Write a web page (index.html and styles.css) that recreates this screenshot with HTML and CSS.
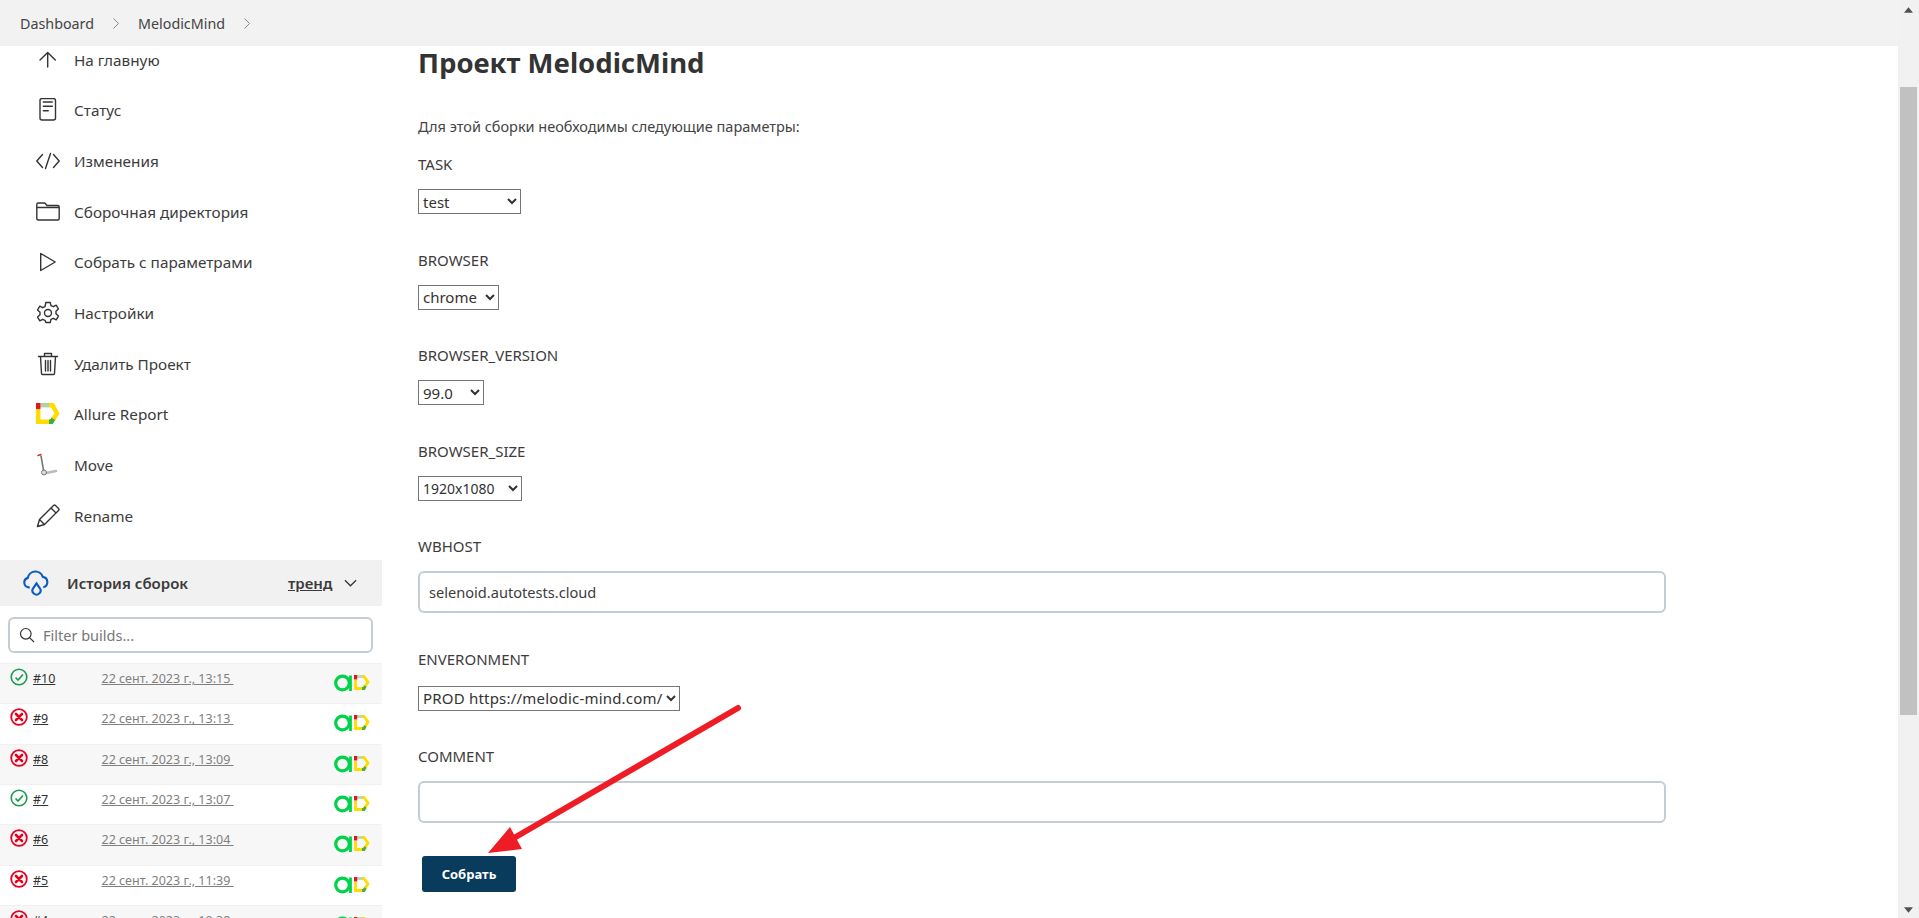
FILE: index.html
```html
<!DOCTYPE html>
<html lang="ru">
<head>
	<meta charset="UTF-8">
	<title>MelodicMind</title>
	<link rel="stylesheet" href="styles.css">
</head>
<body>
<svg class="defs">
	<symbol id="i-ok" viewBox="0 0 18 18">
		<circle cx="9" cy="9" r="7.8" fill="none" stroke="#1c9a4c" stroke-width="1.6"/>
		<path d="M5.500 9.500l2.500 2.500 5-5.500" fill="none" stroke="#1c9a4c" stroke-width="1.7"/>
	</symbol>
	<symbol id="i-fail" viewBox="0 0 18 18">
		<circle cx="9" cy="9" r="7.8" fill="none" stroke="#e6001f" stroke-width="1.8"/>
		<path d="M6 6l6 6M12 6l-6 6" fill="none" stroke="#e6001f" stroke-width="2.6" stroke-linecap="round"/>
	</symbol>
	<symbol id="i-badge" viewBox="0 0 36 18">
		<circle cx="8.500" cy="9" r="6.800" fill="none" stroke="#00d24a" stroke-width="3.2"/>
		<path d="M16.500 1.500V17" stroke="#00d24a" stroke-width="2.800"/>
		<path d="M21.500 6V14.500H29.500L34 8 30 2.500H28" fill="none" stroke="#ffdc00" stroke-width="2.800"/>
		<path d="M23 2.500h5.500" stroke="#b5d8b0" stroke-width="2.800"/>
		<rect x="20" y="1" width="3.200" height="4.500" fill="#e0141c"/>
		<path d="M28 14.500h2l1.500-2.500" fill="none" stroke="#4caf3c" stroke-width="2.800"/>
	</symbol>
</svg>
<div class="page">
	<div class="breadcrumbs">
		<a>Dashboard</a>
		<svg class="crumb-sep" viewBox="0 0 6 11"><path d="M.5 .5l5 5-5 5"/></svg>
		<a>MelodicMind</a>
		<svg class="crumb-sep" viewBox="0 0 6 11"><path d="M.5 .5l5 5-5 5"/></svg>
	</div>
	<div class="main">
		<div class="side">
			<ul class="tasks">
				<li><svg viewBox="0 0 24 24"><path d="M11.700 19V4.500M4 12l7.700-7.500 7.600 7.500"/></svg>На главную</li>
				<li><svg viewBox="0 0 24 24"><rect x="4" y=".5" width="15.500" height="21.500" rx="2"/><path d="M7.300 4h9M7.300 8.300h9M7.300 12.700h5"/></svg>Статус</li>
				<li><svg viewBox="0 0 24 24"><path d="M6.500 5.500L.8 12l5.700 6.500M17.500 5.500L23.200 12l-5.700 6.500M14.500 4.500l-5 15"/></svg>Изменения</li>
				<li><svg viewBox="0 0 24 24"><path d="M.8 7V4.500Q.8 3 2.300 3h6.500L11 5.500h10.700q1.500 0 1.500 1.500v11.500q0 1.500-1.500 1.500H2.300Q.8 20 .8 18.500zM.8 7.500h22.400"/></svg>Сборочная директория</li>
				<li><svg viewBox="0 0 24 24"><path d="M4.700 3.500v17l14.500-8.500z"/></svg>Собрать с параметрами</li>
				<li><svg viewBox="0 0 24 24"><circle cx="12" cy="12" r="3.500"/><path d="M9.800 1.500h4.400l.8 3.200 2.300 1 2.900-1.500 2.200 3.700-2.400 2.300v2.600l2.400 2.300-2.200 3.700-2.900-1.500-2.300 1-.8 3.200H9.800L9 19.300l-2.300-1-2.900 1.500-2.200-3.700 2.400-2.300v-2.600L1.600 8.900l2.200-3.700 2.900 1.500 2.300-1z"/></svg>Настройки</li>
				<li><svg viewBox="0 0 24 24"><path d="M2.500 4.500h19M8.500 4.500V1.500h7v3M4.500 4.500l1 17q0 1 1 1h11q1 0 1-1l1-17M9.500 8.500v10.500M12 8.500v10.500M14.500 8.500v10.500"/></svg>Удалить Проект</li>
				<li><svg class="allure" viewBox="0 0 24 24"><path class="al-y" d="M2.200 7V19.800H15"/><path class="al-d" d="M13 19.800h2.500l2.500-3.800"/><path class="al-y" d="M17.500 17L21 11.500 16.500 3.200H13"/><path class="al-g" d="M4.500 3.200H13"/><path class="al-r" d="M0 1h4.500v6H0z"/></svg>Allure Report</li>
				<li><svg class="move" viewBox="0 0 24 24"><path class="mv-pole" d="M5 3l2.500 14"/><path class="mv-red" d="M2 2.500l3-1"/><path class="mv-base" d="M10 20l10-2"/><circle class="mv-wheel" cx="8" cy="19.500" r="2.500"/></svg>Move</li>
				<li><svg viewBox="0 0 24 24"><path d="M1.500 22.500l2-7L17.500 1.500q1-1 2 0l3 3q1 1 0 2L8.500 20.500zM3.500 15.500l5 5M15 4l5 5"/></svg>Rename</li>
			</ul>
			<div class="history-head">
				<svg class="cloud" viewBox="0 0 28 28"><path d="M7 19H6a5 5 0 0 1-1-9.800 8 8 0 0 1 15.500-1A5.500 5.500 0 0 1 21 19"/><path d="M14 15l-3.500 5a4.200 4.200 0 1 0 7 0z"/></svg>
				<span class="history-title">История сборок</span>
				<a class="trend">тренд</a>
				<svg class="caret" viewBox="0 0 14 8"><path d="M1 1l6 6 6-6"/></svg>
			</div>
			<div class="filter">
				<svg viewBox="0 0 16 16"><circle cx="6.800" cy="6.800" r="5.300"/><path d="M10.800 10.800l4.200 4.200"/></svg>
				<span>Filter builds...</span>
			</div>
			<div class="builds">
				<div class="build"><svg class="status"><use href="#i-ok"/></svg><a class="num">#10</a><a class="date">22 сент. 2023 г., 13:15 </a><svg class="badge"><use href="#i-badge"/></svg></div>
				<div class="build"><svg class="status"><use href="#i-fail"/></svg><a class="num">#9</a><a class="date">22 сент. 2023 г., 13:13 </a><svg class="badge"><use href="#i-badge"/></svg></div>
				<div class="build"><svg class="status"><use href="#i-fail"/></svg><a class="num">#8</a><a class="date">22 сент. 2023 г., 13:09 </a><svg class="badge"><use href="#i-badge"/></svg></div>
				<div class="build"><svg class="status"><use href="#i-ok"/></svg><a class="num">#7</a><a class="date">22 сент. 2023 г., 13:07 </a><svg class="badge"><use href="#i-badge"/></svg></div>
				<div class="build"><svg class="status"><use href="#i-fail"/></svg><a class="num">#6</a><a class="date">22 сент. 2023 г., 13:04 </a><svg class="badge"><use href="#i-badge"/></svg></div>
				<div class="build"><svg class="status"><use href="#i-fail"/></svg><a class="num">#5</a><a class="date">22 сент. 2023 г., 11:39 </a><svg class="badge"><use href="#i-badge"/></svg></div>
				<div class="build"><svg class="status"><use href="#i-fail"/></svg><a class="num">#4</a><a class="date">22 сент. 2023 г., 10:38 </a><svg class="badge"><use href="#i-badge"/></svg></div>
			</div>
		</div>
		<div class="content">
			<h1>Проект MelodicMind</h1>
			<p class="intro">Для этой сборки необходимы следующие параметры:</p>
			<div class="param">
				<label>TASK</label>
				<select class="w-task"><option>test</option></select>
			</div>
			<div class="param">
				<label>BROWSER</label>
				<select class="w-browser"><option>chrome</option></select>
			</div>
			<div class="param">
				<label>BROWSER_VERSION</label>
				<select class="w-version"><option>99.0</option></select>
			</div>
			<div class="param">
				<label>BROWSER_SIZE</label>
				<select class="w-size"><option>1920x1080</option></select>
			</div>
			<div class="param">
				<label>WBHOST</label>
				<input class="text" type="text" value="selenoid.autotests.cloud">
			</div>
			<div class="param">
				<label>ENVERONMENT</label>
				<select class="w-env"><option>PROD https://melodic-mind.com/</option></select>
			</div>
			<div class="param">
				<label>COMMENT</label>
				<input class="text" type="text">
			</div>
			<button class="build-btn">Собрать</button>
		</div>
	</div>
	<svg class="arrow" viewBox="0 0 1919 918">
		<path class="arrow-line" d="M738 708L514 838"/>
		<path class="arrow-head" d="M488 853L510 827 522 849z"/>
	</svg>
	<div class="scrollbar">
		<svg class="sb-up" viewBox="0 0 10 6"><path d="M5 0l5 6H0z"/></svg>
		<div class="sb-thumb"></div>
		<svg class="sb-down" viewBox="0 0 10 6"><path d="M5 6l5-6H0z"/></svg>
	</div>
</div>
</body>
</html>
```
FILE: styles.css
```css
* {
	box-sizing: border-box;
	padding: 0;
	margin: 0;
}
html, body {
	height: 100%;
	overflow: hidden;
}
body {
	font-family: "Noto Sans", "Open Sans", sans-serif;
	font-size: 14px;
	color: #333;
	background: #fff;
}
.defs {
	display: none;
}
.page {
	position: relative;
	height: 918px;
	width: 1919px;
	overflow: hidden;
	padding-right: 21px;
}

/* breadcrumbs */
.breadcrumbs {
	height: 46px;
	background: #f2f2f2;
	display: flex;
	align-items: center;
	padding-left: 20px;
	gap: 19px;
	font-size: 14.3px;
	color: #444;
}
.crumb-sep {
	width: 6px;
	height: 11px;
	fill: none;
	stroke: #888;
	stroke-width: 1;
}

/* layout */
.main {
	display: flex;
}
.side {
	width: 382px;
	flex: none;
}
.content {
	padding-left: 36px;
	width: 1285px;
}

/* side tasks */
.tasks {
	list-style: none;
	margin-top: -11.5px;
	height: 525.5px;
}
.tasks li {
	height: 50.67px;
	display: flex;
	align-items: center;
	gap: 14px;
	padding-left: 36px;
	font-size: 15.3px;
	color: #3c3c3c;
}
.tasks svg {
	width: 24px;
	height: 24px;
	flex: none;
	fill: none;
	stroke: #333;
	stroke-width: 1.4;
	stroke-linecap: round;
	stroke-linejoin: round;
}
.tasks .allure {
	stroke-linecap: butt;
	stroke-linejoin: miter;
	stroke-width: 4.4;
}
.tasks .allure .al-y { stroke: #ffdc00; }
.tasks .allure .al-g { stroke: #a9d5a6; }
.tasks .allure .al-d { stroke: #3caf3c; }
.tasks .allure .al-r { stroke: none; fill: #e8121c; }
.tasks .move .mv-pole { stroke: #777; stroke-width: 1.6; }
.tasks .move .mv-red { stroke: #c33; stroke-width: 1.4; }
.tasks .move .mv-base { stroke: #bbb; stroke-width: 2.6; }
.tasks .move .mv-wheel { stroke: #777; fill: #ddd; stroke-width: 1; }

/* history */
.history-head {
	height: 46px;
	background: #f1f1f1;
	display: flex;
	align-items: center;
	padding-left: 23px;
	padding-bottom: 1px;
}
.cloud {
	width: 27px;
	height: 27px;
	fill: none;
	stroke: #0a5bc4;
	stroke-width: 2.2;
	margin-right: 17px;
}
.history-title {
	font-size: 15px;
	font-weight: 600;
	color: #3a3a3a;
	width: 221px;
}
.trend {
	font-size: 15px;
	font-weight: 600;
	text-decoration: underline;
	color: #3a3a3a;
	width: 56px;
}
.caret {
	width: 13px;
	height: 8px;
	fill: none;
	stroke: #333;
	stroke-width: 1.3;
}
.filter {
	margin: 11px 9px 10px 8px;
	height: 36px;
	border: 2px solid #c3cdd3;
	border-radius: 6px;
	display: flex;
	align-items: center;
	padding-left: 9px;
	gap: 8px;
	font-size: 14.5px;
	color: #777;
}
.filter svg {
	width: 16px;
	height: 16px;
	fill: none;
	stroke: #333;
	stroke-width: 1.2;
}
.build {
	height: 40.33px;
	display: flex;
	align-items: flex-start;
	padding: 4px 0 0 10px;
	border-top: 1px solid #f0f0f0;
	font-size: 12.5px;
}
.build:nth-child(odd) {
	background: #f7f7f7;
}
.status {
	width: 18px;
	height: 18px;
	flex: none;
	margin-right: 5px;
}
.num {
	width: 68.5px;
	text-decoration: underline;
	color: #333;
	line-height: 22px;
}
.date {
	width: 232.5px;
	text-decoration: underline;
	color: #808080;
	line-height: 22px;
	white-space: pre;
}
.badge {
	width: 36px;
	height: 18px;
	margin-top: 6px;
	flex: none;
}

/* form */
h1 {
	font-size: 27.5px;
	font-weight: 700;
	color: #333;
	line-height: 38px;
	margin-top: -2px;
}
.intro {
	font-size: 14.5px;
	color: #444;
	margin: 34px 0 15px;
	line-height: 20px;
}
.param {
	margin-bottom: 32.5px;
}
.param label {
	display: block;
	height: 27px;
	line-height: 27px;
	margin-bottom: 11px;
	font-size: 15px;
	color: #3c3c3c;
}
select {
	display: block;
	height: 25px;
	font-family: inherit;
	font-size: 15px;
	color: #333;
	background: #fff;
	border: 1px solid #767676;
	border-radius: 0;
}
.w-task { width: 103px; }
.w-browser { width: 81px; }
.w-version { width: 66px; }
.w-size { width: 104px; font-size: 14px; }
.w-env { width: 262px; margin-top: 13px; letter-spacing: .2px; }
.text {
	display: block;
	width: 1248px;
	height: 42px;
	border: 2px solid #c3cdd3;
	border-radius: 6px;
	padding: 0 9px;
	font-family: inherit;
	font-size: 14.6px;
	color: #3c3c3c;
	background: #fff;
}
.build-btn {
	display: block;
	margin-left: 4px;
	width: 94px;
	height: 36px;
	background: #083b5c;
	border: 0;
	border-radius: 3px;
	color: #fff;
	font-family: inherit;
	font-size: 13px;
	font-weight: 700;
}

/* annotation arrow drawn over the page */
.arrow {
	position: absolute;
	left: 0;
	top: 0;
	width: 1919px;
	height: 918px;
	pointer-events: none;
}
.arrow-line {
	stroke: #ee1c25;
	stroke-width: 6;
	stroke-linecap: round;
	fill: none;
}
.arrow-head {
	fill: #ee1c25;
}

/* scrollbar */
.scrollbar {
	position: absolute;
	right: 0;
	top: 0;
	width: 21px;
	height: 918px;
	background: #f1f1f1;
}
.sb-up, .sb-down {
	position: absolute;
	left: 6px;
	width: 9px;
	height: 6px;
	fill: #505050;
}
.sb-up { top: 7px; }
.sb-down { bottom: 5px; }
.sb-thumb {
	position: absolute;
	left: 2px;
	top: 87px;
	width: 17px;
	height: 628px;
	background: #c1c1c1;
}
```
